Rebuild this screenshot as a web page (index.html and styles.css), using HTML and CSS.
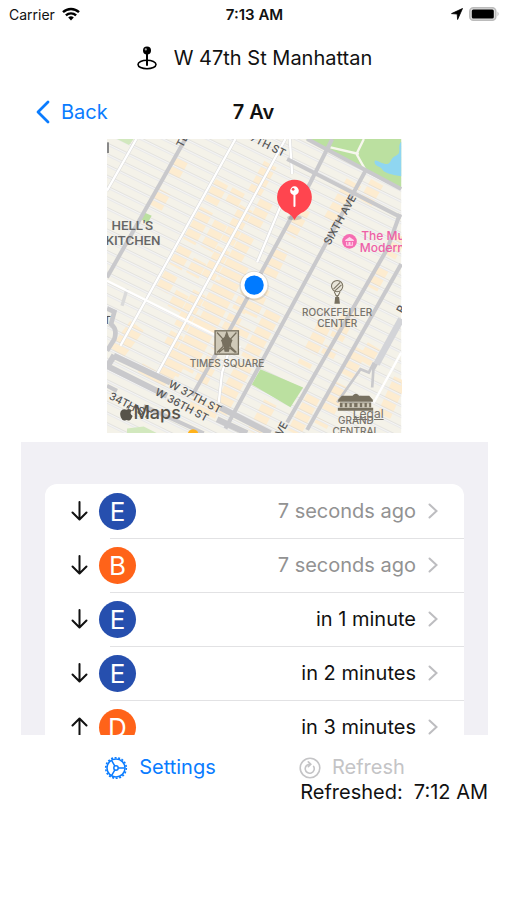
FILE: index.html
```html
<!DOCTYPE html>
<html lang="en">
<head>
  <meta charset="UTF-8">
  <meta name="viewport" content="width=device-width, initial-scale=1">
  <title>7 Av - W 47th St Manhattan</title>
  <link rel="stylesheet" href="styles.css">
</head>
<body>
  <div class="status-bar">
    <div class="carrier">
      <span>Carrier</span>
      <svg width="18" height="14" viewBox="0 0 18 14" fill="none" stroke="#000" stroke-width="2.4">
        <path d="M1 5.2a11.6 11.6 0 0 1 16 0"/>
        <path d="M3.9 8.4a7.4 7.4 0 0 1 10.2 0"/>
        <path d="M6.2 10.6a4 4 0 0 1 5.6 0L9 13.6z" fill="#000" stroke="none"/>
      </svg>
    </div>
    <span class="clock">7:13 AM</span>
    <div class="indicators">
      <svg width="12" height="12" viewBox="0 0 12 12"><path d="M11.5.5 6.6 11.5 6.2 6 .5 5.6z" stroke="#000" stroke-width=".8" stroke-linejoin="round"/></svg>
      <svg width="31" height="14" viewBox="0 0 31 14">
        <rect x=".8" y=".8" width="26" height="12.4" rx="3.5" fill="#ddd" stroke="#bbb" stroke-width="1.5"/>
        <rect x="2.8" y="2.6" width="22" height="8.8" rx="1.5"/>
        <path d="M28.5 4.6q2.4 2.4 0 4.8z" fill="#bbb"/>
      </svg>
    </div>
  </div>

  <header class="location">
    <svg width="20" height="24" viewBox="0 0 20 24">
      <ellipse cx="10" cy="18.5" rx="9" ry="4.2" fill="none" stroke="#000" stroke-width="1.6"/>
      <path d="M10 7v12" stroke="#000" stroke-width="2" stroke-linecap="round"/>
      <circle cx="10" cy="4.6" r="4"/>
      <circle cx="8.8" cy="3.4" r="1.1" fill="#aaa"/>
    </svg>
    <span>W 47th St Manhattan</span>
  </header>

  <nav class="nav">
    <a href="#" class="back">
      <svg width="14" height="24" viewBox="0 0 14 24" fill="none" stroke="#0a7cff" stroke-width="2.8" stroke-linecap="round" stroke-linejoin="round"><path d="M12 2 2 12l10 10"/></svg>
      <span>Back</span>
    </a>
    <h1>7 Av</h1>
  </nav>

  <main>
    <div class="map">
      <svg viewBox="0 0 882 882">
        <defs>
          <pattern id="streets" width="200" height="29" patternUnits="userSpaceOnUse" patternTransform="rotate(26)">
            <path d="M0 14h200" stroke="#d4d4d4" stroke-width="7"/>
            <path d="M0 14h200" stroke="#fff" stroke-width="4"/>
          </pattern>
        </defs>
        <rect width="882" height="882" fill="#f4f2e9"/>

        <!-- commercial blocks along the avenues -->
        <g stroke="#fdecd0" stroke-width="42" fill="none">
          <path d="M225 60 145 205" stroke-dasharray="60 50"/>
          <path d="M345 130 165 455" stroke-dasharray="70 24 110 16"/>
          <path d="M395 155 200 510" stroke-dasharray="50 60 90 40"/>
          <path d="M490 75 190 620" stroke-dasharray="100 50 120 20"/>
          <path d="M480 185 195 705" stroke-dasharray="90 30 150 10"/>
          <path d="M400 370 230 690" stroke-width="60"/>
          <path d="M450 410 280 730" stroke-dasharray="120 16"/>
          <path d="M90 560 30 640M215 640 170 720" stroke-width="50"/>
          <path d="M590 210 540 300M525 330 400 590" stroke-dasharray="90 40"/>
          <path d="M500 520 330 830" stroke-width="48" stroke-dasharray="160 20"/>
          <path d="M740 130 670 250" stroke-width="50"/>
          <path d="M810 130 770 200M880 290 790 450" stroke-dasharray="70 40"/>
          <path d="M650 560 590 680M730 520 660 650M760 630 640 860" stroke-dasharray="90 30"/>
          <path d="M490 790 440 882M620 770 560 882M880 720 830 830M800 620 770 670"/>
          <path d="M100 685 180 730M250 790 330 825" stroke-width="30"/>
        </g>

        <rect width="882" height="882" fill="url(#streets)"/>

        <!-- parks and lake -->
        <path d="M595 0 882 150V0z" fill="#bbe0a0"/>
        <path d="M882 8c-14 14 4 35-16 42s-12 30-34 24-30-16-30-4 18 12 24 22 24 12 34 16l22 4z" fill="#8fd6f1"/>
        <path d="M460 690 588 745 550 804 434 736z" fill="#bbe0a0"/>
        <path d="M112 220l22 10-12 22-22-12z" fill="#bbe0a0"/>
        <path d="M60 868 110 862 150 882H60zM30 0h50l-14 18z" fill="#d2e8be"/>
        <path d="M670 25 755 45M770 0 748 45 776 95" stroke="#f7f7ee" stroke-width="7" fill="none"/>

        <!-- avenues -->
        <g fill="none" stroke="#dadada" stroke-width="10">
          <path d="M88 0 0 155M385 0 40 620M535 0 150 705M548 0 555 105M525 190 450 370M380 590 345 700 335 790M60 450 45 500"/>
        </g>
        <g fill="none" stroke="#fff" stroke-width="7">
          <path d="M88 0 0 155M385 0 40 620M535 0 150 705M548 0 555 105M525 190 450 370M380 590 345 700 335 790M0 425 400 625M882 640 800 790"/>
        </g>
        <g fill="none" stroke="#c9c9cc" stroke-width="12">
          <path d="M235 0 0 415"/>
          <path d="M675 0 610 130 375 560 255 770"/>
          <path d="M775 95 430 730 355 868"/>
          <path d="M878 225 840 330 540 850"/>
          <path d="M882 375 600 872"/>
          <path d="M882 540 800 690M690 790 760 690 785 700 800 670 795 745" stroke-width="8"/>
          <path d="M882 540 808 675" stroke-width="20" stroke="#d3d4d8"/>
          <path d="M600 0 882 150M540 60 882 235"/>
          <path d="M0 680 180 770M330 840 420 882M20 650 190 730M340 805 490 882M22 648 0 684" stroke-width="18"/>
          <path d="M0 508 22 518 12 555Q32 570 22 600L0 635" stroke-width="14"/>
          <path d="M0 740 30 755M110 800 290 882"/>
          <path d="M0 10v32" stroke="#888"/>
        </g>

        <!-- street and area names -->
        <g class="street">
          <text transform="translate(226 28) rotate(-62)">TENTH</text>
          <text transform="translate(410 -6) rotate(27)">57TH ST</text>
          <text transform="translate(668 320) rotate(-61)">SIXTH AVE</text>
          <text transform="translate(182 742) rotate(28)">W 37TH ST</text>
          <text transform="translate(142 766) rotate(28)">W 36TH ST</text>
          <text transform="translate(4 778) rotate(27)">34TH ST</text>
          <text transform="translate(523 892) rotate(-61)">VE</text>
          <text transform="translate(886 525) rotate(-61)">P</text>
          <text x="-10" y="555">T</text>
        </g>
        <g class="area">
          <text x="76" y="273">HELL'S</text>
          <text x="78" y="319">KITCHEN</text>
        </g>
        <g class="place">
          <text x="690" y="531">ROCKEFELLER</text>
          <text x="690" y="563">CENTER</text>
          <text x="360" y="685">TIMES SQUARE</text>
          <text x="746" y="855">GRAND</text>
          <text x="746" y="887">CENTRAL</text>
        </g>
        <g class="museum">
          <text x="762" y="302">The Museum</text>
          <text x="758" y="339">Modern Art</text>
        </g>
        <circle cx="727" cy="307" r="22" fill="#f56cb2"/>
        <path d="M714 303 727 294l13 9v3h-26zM717 309h3v8h4v-8h6v8h4v-8h3v11h-20z" fill="#ffd6ea"/>

        <!-- landmarks -->
        <g stroke="#77705f" fill="none" stroke-width="4">
          <circle cx="690" cy="441" r="17" fill="#e8e4d8" stroke-width="3"/>
          <path d="M679 450 699 430M683 455 703 437" stroke-width="3"/>
          <path d="M681 457 687 470H693L699 457" stroke-width="3"/>
          <path d="M690 468v10M686 476h8l2 16h-12z" fill="#77705f"/>
          <rect x="324" y="575" width="70" height="70" fill="#d0cab9"/>
          <path d="M330 580 348 600v22L330 640M388 580 370 600v22L388 640M335 640 350 628H370L385 640"/>
          <path d="M359 580 364 594 374 604 366 622 364 636H354L352 622 344 604 354 594z" fill="#77705f"/>
        </g>
        <g fill="#77705f">
          <path d="M693 782 704 770H736Q746 758 756 770H786L797 782V788H693zM698 790H792V804H698zM692 806H798V815H692z"/>
          <path d="M706 792h7v13h-7zM720 792h7v13h-7zM734 792h7v13h-7zM751 792h7v13h-7zM765 792h7v13h-7zM779 792h7v13h-7z" fill="#d0cab9"/>
        </g>
        <circle cx="258" cy="886" r="16" fill="#ffb21a"/>

        <!-- station pin -->
        <ellipse cx="562" cy="236" rx="22" ry="8" fill="#000" opacity=".15"/>
        <path d="M562 122a52 52 0 0 1 20 100q-12 6-20 21-8-15-20-21a52 52 0 0 1 20-100z" fill="#ff454f"/>
        <circle cx="562" cy="155" r="13" fill="#fff"/>
        <path d="M562 165v36" stroke="#fff" stroke-width="6" stroke-linecap="round"/>
        <circle cx="558" cy="151" r="4" fill="#ff454f"/>

        <!-- current position -->
        <circle cx="441" cy="440" r="44" fill="#000" opacity=".1"/>
        <circle cx="441" cy="438" r="40" fill="#fff"/>
        <circle cx="441" cy="438" r="29" fill="#007aff"/>
      </svg>
      <div class="brand">
        <svg width="13" height="16" viewBox="0 0 13 16" fill="#57534a"><path d="M9 0q.2 2.600-2.600 3.600Q6.200 1 9 0zM6.600 4.700Q9.600 3 12 5.600q-3.200 2.400.600 5.400-2.200 5.600-4.400 4.400-1.600-.8-3.200 0Q2.500 16.200.800 12.200-1 6.800 2.200 4.700q1.800-1 4.400 0z"/></svg>
        <span>Maps</span>
      </div>
      <a href="#" class="legal">Legal</a>
    </div>

    <div class="arrivals">
      <ul>
        <li>
          <a href="#" class="past">
            <svg class="arrow" viewBox="0 0 17 20"><path d="M8.500 1v17M1.500 11.500l7 7 7-7"/></svg>
            <span class="line blue">E</span>
            <span class="time">7 seconds ago</span>
            <svg class="chevron" viewBox="0 0 10 16"><path d="M1.500 1.500 8.500 8l-7 6.500"/></svg>
          </a>
        </li>
        <li>
          <a href="#" class="past">
            <svg class="arrow" viewBox="0 0 17 20"><path d="M8.500 1v17M1.500 11.500l7 7 7-7"/></svg>
            <span class="line orange">B</span>
            <span class="time">7 seconds ago</span>
            <svg class="chevron" viewBox="0 0 10 16"><path d="M1.500 1.500 8.500 8l-7 6.500"/></svg>
          </a>
        </li>
        <li>
          <a href="#">
            <svg class="arrow" viewBox="0 0 17 20"><path d="M8.500 1v17M1.500 11.500l7 7 7-7"/></svg>
            <span class="line blue">E</span>
            <span class="time">in 1 minute</span>
            <svg class="chevron" viewBox="0 0 10 16"><path d="M1.500 1.500 8.500 8l-7 6.500"/></svg>
          </a>
        </li>
        <li>
          <a href="#">
            <svg class="arrow" viewBox="0 0 17 20"><path d="M8.500 1v17M1.500 11.500l7 7 7-7"/></svg>
            <span class="line blue">E</span>
            <span class="time">in 2 minutes</span>
            <svg class="chevron" viewBox="0 0 10 16"><path d="M1.500 1.500 8.500 8l-7 6.500"/></svg>
          </a>
        </li>
        <li>
          <a href="#">
            <svg class="arrow" viewBox="0 0 17 20"><path d="M8.500 19V2M1.500 8.500l7-7 7 7"/></svg>
            <span class="line orange">D</span>
            <span class="time">in 3 minutes</span>
            <svg class="chevron" viewBox="0 0 10 16"><path d="M1.500 1.500 8.500 8l-7 6.500"/></svg>
          </a>
        </li>
      </ul>
    </div>
  </main>

  <footer>
    <div class="actions">
      <button type="button">
        <svg width="24" height="24" viewBox="0 0 24 24" fill="none" stroke="currentColor" stroke-width="1.5">
          <circle cx="12" cy="12" r="10.300" stroke-width="1.600" stroke-dasharray="2 1.600"/>
          <circle cx="12" cy="12" r="9"/>
          <circle cx="12" cy="12" r="2.200"/>
          <path d="M14.200 12h6.400M10.900 10.100 7.700 4.600M10.900 13.900l-3.200 5.500"/>
        </svg>
        <span>Settings</span>
      </button>
      <button type="button" disabled>
        <svg width="22" height="22" viewBox="0 0 22 22" fill="none" stroke="currentColor" stroke-width="1.6" stroke-linecap="round">
          <circle cx="11" cy="11" r="9.800"/>
          <path d="M14.600 9.400a4.500 4.500 0 1 1-3.600-2.200M9.300 4.800 11.800 7.200 9.300 9.600"/>
        </svg>
        <span>Refresh</span>
      </button>
    </div>
    <p class="refreshed"><span>Refreshed:</span> <span>7:12 AM</span></p>
  </footer>
</body>
</html>
```
FILE: styles.css
```css
* {
  box-sizing: border-box;
}
body {
  margin: 0;
  font-family: Inter, "Liberation Sans", sans-serif;
  font-size: 20px;
  line-height: 25px;
  color: #111;
  background: #fff;
}
a {
  color: inherit;
  text-decoration: none;
}
svg {
  display: block;
  flex: none;
}

.status-bar {
  display: grid;
  grid-template-columns: 1fr auto 1fr;
  align-items: center;
  height: 28px;
  padding: 0 7px 0 9px;
  font-size: 14px;
}
.carrier {
  display: flex;
  align-items: center;
  gap: 7px;
}
.clock {
  font-size: 15px;
  font-weight: 600;
}
.indicators {
  display: flex;
  justify-content: flex-end;
  align-items: center;
  gap: 6px;
}

.location {
  display: flex;
  justify-content: center;
  align-items: center;
  gap: 17px;
  height: 60px;
  padding-left: 2px;
}

.nav {
  display: grid;
  grid-template-columns: 1fr auto 1fr;
  align-items: center;
  height: 48px;
  padding: 0 36px;
}
.nav h1 {
  margin: 0;
  font-size: 20px;
  font-weight: 600;
}
.back {
  display: flex;
  align-items: center;
  gap: 11px;
  color: #0a7cff;
}

main {
  padding: 0 19px 0 21px;
}
.map {
  position: relative;
  width: 63%;
  margin: 3px auto 9px;
  overflow: hidden;
}
.map > svg {
  width: 100%;
}
.street {
  font-size: 32px;
  font-weight: 500;
  fill: #555;
}
.area {
  font-family: Roboto, sans-serif;
  font-size: 40px;
  font-weight: 500;
  fill: #666;
  text-anchor: middle;
}
.place {
  font-size: 30px;
  font-weight: 500;
  fill: #77736a;
  text-anchor: middle;
}
.museum {
  font-size: 36px;
  font-weight: 500;
  fill: #ee5fa7;
}
.brand {
  position: absolute;
  left: 13px;
  bottom: 8px;
  display: flex;
  align-items: center;
  font-size: 18px;
  font-weight: 500;
  color: #57534a;
}
.legal {
  position: absolute;
  right: 18px;
  bottom: 11px;
  font-size: 12px;
  line-height: 16px;
  color: #77736a;
  text-decoration: underline;
}

.arrivals {
  height: 293px;
  padding: 42px 24px 0;
  overflow: hidden;
  background: #f1f0f5;
}
.arrivals ul {
  margin: 0;
  padding: 0;
  list-style: none;
  background: #fff;
  border-radius: 12px;
}
.arrivals li {
  position: relative;
}
.arrivals li + li::before {
  content: "";
  position: absolute;
  top: 0;
  left: 65px;
  right: 0;
  height: 1px;
  background: #e2e2e4;
}
.arrivals li a {
  display: flex;
  align-items: center;
  height: 54px;
  padding: 0 26px;
}
.arrivals .past {
  color: #929292;
}
.arrow {
  width: 17px;
  height: 20px;
  fill: none;
  stroke: #111;
  stroke-width: 2;
  stroke-linecap: round;
  stroke-linejoin: round;
}
.line {
  width: 37px;
  height: 37px;
  margin-left: 11px;
  border-radius: 50%;
  font-size: 26px;
  line-height: 37px;
  text-align: center;
  color: #fff;
}
.blue {
  background: #264fae;
}
.orange {
  background: #ff6319;
}
.time {
  margin-left: auto;
}
.chevron {
  width: 10px;
  height: 16px;
  margin-left: 12px;
  fill: none;
  stroke: #bdbdc0;
  stroke-width: 2;
  stroke-linecap: round;
}

footer {
  padding: 20px 19px 20px 21px;
}
.actions {
  display: flex;
  justify-content: space-evenly;
}
.actions button {
  display: flex;
  align-items: center;
  gap: 11px;
  padding: 0;
  border: 0;
  background: none;
  font: inherit;
  color: #0a7cff;
}
.actions button:disabled {
  color: #c4c4c6;
}
.refreshed {
  display: flex;
  justify-content: flex-end;
  gap: 11px;
  margin: 0;
}
```
